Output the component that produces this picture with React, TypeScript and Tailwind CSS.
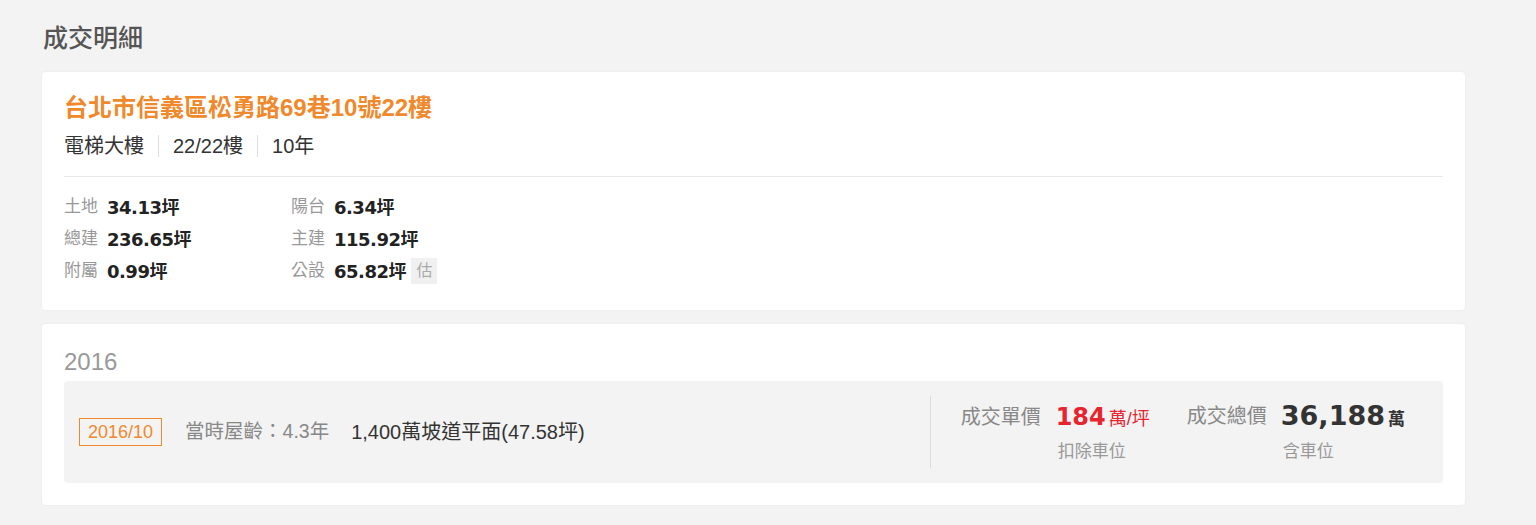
import React from 'react'

const font = { fontFamily: '"Liberation Sans", "Noto Sans CJK TC", sans-serif' }

type AreaItem = {
  label: string,
  value: string,
  tag?: string
}

const areaLeft: AreaItem[] = [
  { label: '土地', value: '34.13' },
  { label: '總建', value: '236.65' },
  { label: '附屬', value: '0.99' }
]

const areaRight: AreaItem[] = [
  { label: '陽台', value: '6.34' },
  { label: '主建', value: '115.92' },
  { label: '公設', value: '65.82', tag: '估' }
]

const AreaRow = ({ label, value, tag }: AreaItem) => (
  <div className="flex items-center h-[32px]">
    <span className="text-[17px] text-[#999] w-[43px] leading-[24px]">{label}</span>
    <span className="text-[18px] font-bold text-[#222] font-['DejaVu_Sans','Noto_Sans_CJK_TC',sans-serif] tracking-[-0.5px]">
      {value}
      <span className="font-['Noto_Sans_CJK_TC',sans-serif] tracking-normal">坪</span>
    </span>
    {tag && (
      <span className="ml-[5px] bg-[#f0f0f0] text-[#aaa] text-[16px] px-[5px] h-[26px] leading-[26px]">{tag}</span>
    )}
  </div>
)

const App = () => {
  return (
    <div className="min-h-[525px] bg-[#f3f3f3] pt-[23px] pb-[20px]" style={font}>
      <div className="ml-[42px] w-[1423px]">
        <h1 className="text-[25px] font-medium text-[#555] pl-[1px] leading-[30px]">成交明細</h1>

        <div className="mt-[19px] bg-white rounded-[4px] shadow-[0_0_3px_rgba(0,0,0,0.05)] px-[22px] pt-[22px] pb-[23px]">
          <h2 className="text-[24px] font-bold text-[#f0892c] leading-[28px] whitespace-nowrap">台北市信義區松勇路69巷10號22樓</h2>
          <div className="mt-[13px] flex items-center text-[20px] text-[#333] leading-[22px] pb-[19px] border-b border-[#e8e8e8]">
            <span>電梯大樓</span>
            <span className="mx-[14px] h-[22px] w-px bg-[#ddd]"></span>
            <span>22/22樓</span>
            <span className="mx-[14px] h-[22px] w-px bg-[#ddd]"></span>
            <span>10年</span>
          </div>
          <div className="mt-[14px] flex">
            <div className="w-[227px]">
              {areaLeft.map((item) => <AreaRow key={item.label} {...item} />)}
            </div>
            <div>
              {areaRight.map((item) => <AreaRow key={item.label} {...item} />)}
            </div>
          </div>
        </div>

        <div className="mt-[14px] bg-white rounded-[4px] shadow-[0_0_3px_rgba(0,0,0,0.05)] px-[22px] pt-[24px] pb-[22px]">
          <div className="text-[24px] text-[#999] leading-[28px]">2016</div>
          <div className="mt-[5px] bg-[#f3f3f3] rounded-[4px] h-[102px] flex items-center pl-[15px] pr-[38px]">
            <span className="border border-[#f0892c] text-[#f0892c] text-[18px] h-[28px] leading-[26px] px-[8px]">2016/10</span>
            <span className="ml-[23px] text-[19.5px] text-[#888]">當時屋齡：4.3年</span>
            <span className="ml-[22px] text-[20px] text-[#333]">1,400萬坡道平面(47.58坪)</span>

            <div className="ml-auto flex items-center h-[72px] border-l border-[#dcdcdc] pl-[30px]">
              <div className="flex items-start">
                <span className="text-[20px] text-[#888] leading-[28px] mr-[15px]">成交單價</span>
                <div className="flex flex-col">
                  <span className="text-[#e8242f] leading-[28px] whitespace-nowrap">
                    <span className="text-[24px] font-bold font-['DejaVu_Sans',sans-serif]">184</span>
                    <span className="text-[18px] ml-[3px]">萬/坪</span>
                  </span>
                  <span className="mt-[8px] text-[17px] text-[#999] leading-[20px] pl-[2px]">扣除車位</span>
                </div>
              </div>
              <div className="flex items-start ml-[37px]">
                <span className="text-[20px] text-[#888] leading-[28px] mr-[14px]">成交總價</span>
                <div className="flex flex-col">
                  <span className="text-[#333] leading-[28px] whitespace-nowrap">
                    <span className="text-[27px] font-bold font-['DejaVu_Sans',sans-serif]">36,188</span>
                    <span className="text-[17px] font-bold ml-[3px]">萬</span>
                  </span>
                  <span className="mt-[8px] text-[17px] text-[#999] leading-[20px] pl-[2px]">含車位</span>
                </div>
              </div>
            </div>
          </div>
        </div>
      </div>
    </div>
  )
}

export default App
